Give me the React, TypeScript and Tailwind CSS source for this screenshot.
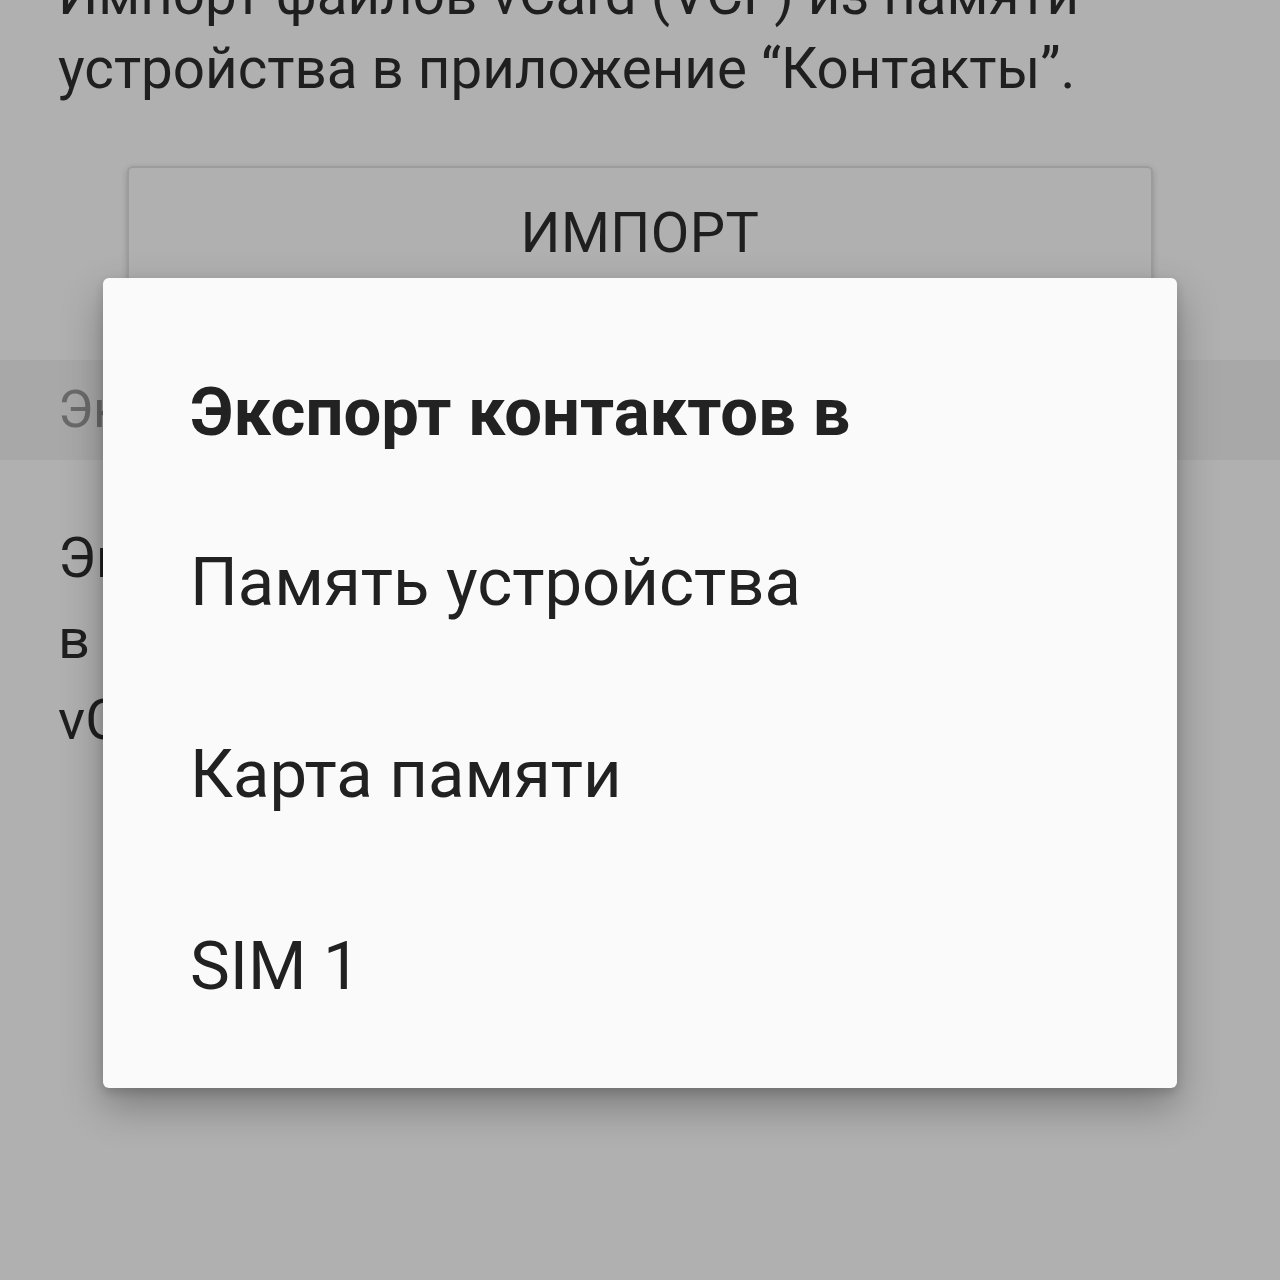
import React from 'react';

const font = { fontFamily: 'Roboto, "Noto Sans", sans-serif' };

export default function App() {
  return (
    <div className="relative w-[1280px] h-[1280px] overflow-hidden bg-[#b0b0b0]" style={font}>
      {/* Page underneath the scrim */}
      <div className="flex flex-col">
        <div className="mt-[-42px] px-[58px] text-[56.5px] leading-[74px] text-[#1f1f1f] whitespace-nowrap">
          <p>Импорт файлов vCard (VCF) из памяти</p>
          <p>устройства в приложение “Контакты”.</p>
        </div>

        <div className="mt-[60px] mx-[127px] h-[134px] rounded-[6px] border-2 border-[#9c9c9c] bg-[#b0b0b0] shadow-[0_2px_6px_rgba(0,0,0,0.18)] flex items-center justify-center">
          <span className="text-[56px] text-[#1f1f1f] tracking-[0.5px]">ИМПОРТ</span>
        </div>

        <div className="mt-[60px] h-[100px] bg-[#a8a8a8] px-[58px] flex items-center">
          <span className="text-[52px] text-[#6a6a6a]">Экспорт</span>
        </div>

        <div className="mt-[58px] px-[58px] text-[56px] leading-[81px] text-[#1f1f1f] whitespace-nowrap">
          <p>Экспорт всех контактов</p>
          <p>в память устройства</p>
          <p>vCard (VCF)</p>
        </div>
      </div>

      {/* Dialog */}
      <div className="absolute left-[103px] top-[278px] w-[1074px] rounded-[6px] bg-[#fafafa] shadow-[0_18px_40px_rgba(0,0,0,0.3),0_4px_10px_rgba(0,0,0,0.15)] pt-[95px] pb-[26px] pl-[87px]">
        <h2 className="text-[67px] leading-[78px] font-bold text-[#222222]">Экспорт контактов в</h2>
        <ul className="mt-[35px] flex flex-col">
          <li className="h-[192px] text-[67px] leading-[192px] text-[#212121]">Память устройства</li>
          <li className="h-[192px] text-[67px] leading-[192px] text-[#212121]">Карта памяти</li>
          <li className="h-[192px] text-[67px] leading-[192px] text-[#212121]">SIM 1</li>
        </ul>
      </div>
    </div>
  );
}
